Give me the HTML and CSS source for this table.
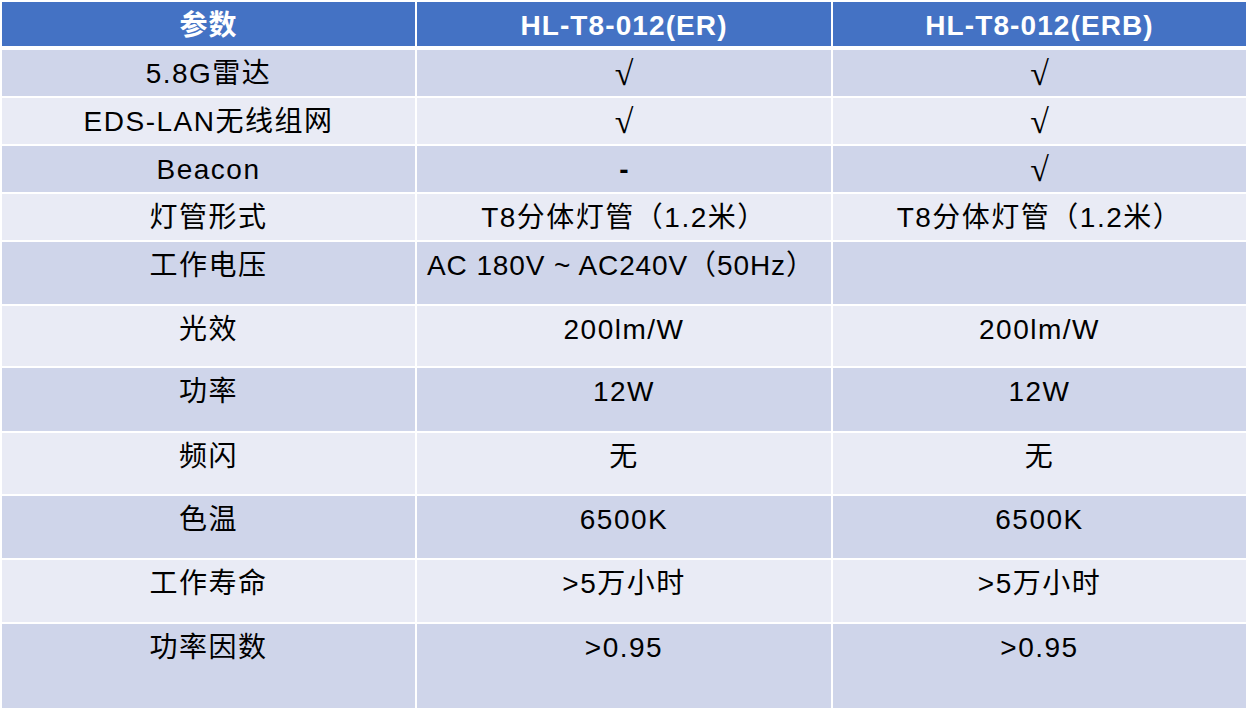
FILE: index.html
```html
<!DOCTYPE html>
<html lang="zh-CN">
<head>
<meta charset="utf-8">
<title>参数对比</title>
<link rel="stylesheet" href="styles.css">
</head>
<body>
<div class="spec-table">
  <div class="cell head">参数</div>
  <div class="cell head">HL-T8-012(ER)</div>
  <div class="cell head">HL-T8-012(ERB)</div>

  <div class="cell dark r46">5.8G雷达</div>
  <div class="cell dark r46"><span class="check">√</span></div>
  <div class="cell dark r46"><span class="check">√</span></div>

  <div class="cell light r46">EDS-LAN无线组网</div>
  <div class="cell light r46"><span class="check">√</span></div>
  <div class="cell light r46"><span class="check">√</span></div>

  <div class="cell dark r46">Beacon</div>
  <div class="cell dark r46"><span class="dash">-</span></div>
  <div class="cell dark r46"><span class="check">√</span></div>

  <div class="cell light r46">灯管形式</div>
  <div class="cell light r46">T8分体灯管（1.2米）</div>
  <div class="cell light r46">T8分体灯管（1.2米）</div>

  <div class="cell dark">工作电压</div>
  <div class="cell dark left"><span class="tight">AC 180V ~ AC240V（50Hz）</span></div>
  <div class="cell dark"></div>

  <div class="cell light">光效</div>
  <div class="cell light">200lm/W</div>
  <div class="cell light">200lm/W</div>

  <div class="cell dark">功率</div>
  <div class="cell dark">12W</div>
  <div class="cell dark">12W</div>

  <div class="cell light">频闪</div>
  <div class="cell light">无</div>
  <div class="cell light">无</div>

  <div class="cell dark">色温</div>
  <div class="cell dark">6500K</div>
  <div class="cell dark">6500K</div>

  <div class="cell light">工作寿命</div>
  <div class="cell light">&gt;5万小时</div>
  <div class="cell light">&gt;5万小时</div>

  <div class="cell dark">功率因数</div>
  <div class="cell dark">&gt;0.95</div>
  <div class="cell dark">&gt;0.95</div>
</div>
</body>
</html>
```
FILE: styles.css
```css
html, body {
  margin: 0;
  padding: 0;
  background: #ffffff;
}

.spec-table {
  display: grid;
  grid-template-columns: 413px 414px 413px;
  grid-template-rows: 46px 46px 46px 46px 46px 62px 60px 63px 61px 62px 62px 84px;
  column-gap: 2px;
  row-gap: 2px;
  padding: 2px;
  width: 1248px;
  box-sizing: border-box;
  background: #ffffff;
  font-family: "Liberation Sans", "Noto Sans CJK SC", sans-serif;
  font-size: 28px;
  line-height: 32px;
  letter-spacing: 1.5px;
  color: #000000;
}

.cell {
  box-sizing: border-box;
  padding-top: 8px;
  text-align: center;
  white-space: nowrap;
  overflow: visible;
}

.head {
  background: #4472c4;
  color: #ffffff;
  font-weight: bold;
  letter-spacing: 1.1px;
  border-bottom: 2px solid #ffffff;
}

.dark {
  background: #cfd5ea;
}

.light {
  background: #e9ebf5;
}

.left {
  text-align: left;
  padding-left: 10px;
}

.tight {
  letter-spacing: 0.9px;
}

.check {
  font-family: "Liberation Serif", "DejaVu Serif", serif;
  font-size: 34px;
  letter-spacing: 0;
}

.dash {
  font-weight: bold;
  letter-spacing: 0;
}
```
